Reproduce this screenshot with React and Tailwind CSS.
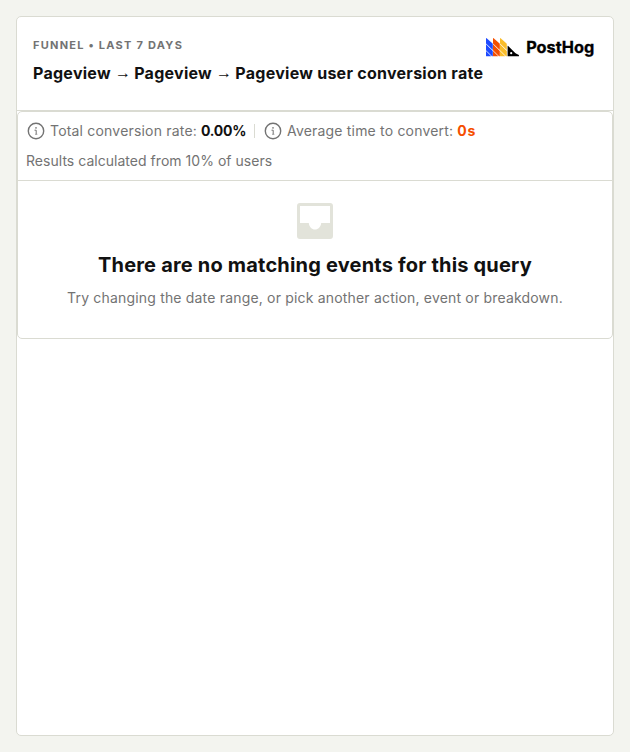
function Logo() {
  return (
    <svg className="overflow-visible" width="110" height="22" viewBox="0 0 110 22" role="img" aria-label="PostHog">
      <g transform="translate(1 2)">
        {[
          ['#1d4aff', 0],
          ['#f54e00', 7],
          ['#f9bd2b', 14],
        ].map(([fill, x]) => (
          <g key={x} fill={fill} transform={`translate(${x} 0)`}>
            <path d="M0 .7Q0 -.4 .9 .4L6.3 5.3Q6.8 5.8 6.8 6.5V12.1L0 5.5Z" />
            <path d="M0 6.3L6.8 12.9V18.3H6.1L0 12.2Z" />
            <path d="M0 13L5.3 18.3H.5Q0 18.3 0 17.8Z" />
          </g>
        ))}
        <path fill="#000" d="M21.6 8.2Q21.6 7.4 22.2 8L29.2 15Q30.2 16 32 16.4Q33 16.7 33 17.6V18.3H21.6Z" />
        <circle cx="25.2" cy="15.2" r="1.1" fill="#fff" />
      </g>
      <text
        x="41.2"
        y="17.1"
        textLength="68"
        lengthAdjust="spacingAndGlyphs"
        strokeWidth=".3"
        className="fill-black stroke-black font-[Inter,sans-serif] text-[15.5px] font-bold"
      >
        PostHog
      </text>
    </svg>
  );
}

function InfoIcon() {
  return (
    <svg className="mr-1 size-5 shrink-0" viewBox="0 0 20 20" fill="none" stroke="#737373">
      <circle cx="10" cy="10" r="7.7" strokeWidth="1.4" />
      <path d="M8.5 9.2H10.2V13.4" strokeWidth="1" />
      <path d="M9 13.3H11.4" strokeWidth=".6" />
      <circle cx="10" cy="6.9" r=".8" fill="#737373" stroke="none" />
    </svg>
  );
}

function EmptyIcon() {
  return (
    <svg className="h-9 w-9" viewBox="0 0 36 36" fill="#e2e3da">
      <path
        fillRule="evenodd"
        d="M3 0H33Q36 0 36 3V33Q36 36 33 36H3Q0 36 0 33V3Q0 0 3 0ZM3 3V20H11.8C12.3 24 14.7 26.5 18 26.5S23.7 24 24.2 20H33V3Z"
      />
    </svg>
  );
}

function Arrow() {
  return (
    <span className="relative -top-px -mr-[0.8px] font-['Liberation_Sans',sans-serif] font-normal tracking-normal">
      →
    </span>
  );
}

export default function App() {
  return (
    <div className="h-[752px] bg-[#f3f4ef] p-4 font-[Inter,sans-serif] text-sm text-[#737373]">
      <main className="h-[720px] rounded-[5px] border border-[#dadbd2] bg-white">
        <header className="flex h-[94px] justify-between border-b border-[#dadbd2] pl-4 pr-[18px] pt-[19px]">
          <div className="whitespace-nowrap">
            <h5 className="mt-[1px] text-[11px] font-bold uppercase leading-4 tracking-[1.25px]">
              Funnel • Last 7 days
            </h5>
            <h4 className="mt-2 text-base font-bold leading-6 tracking-[0.27px] text-[#111]">
              Pageview <Arrow /> Pageview <Arrow /> Pageview user conversion rate
            </h4>
          </div>
          <div className="-ml-4">
            <Logo />
          </div>
        </header>
        <section className="h-[228px] rounded-[5px] border border-[#dadbd2]">
          <div className="h-[69px] border-b border-[#dadbd2] px-2 pt-[9px]">
            <div className="flex h-5 items-center whitespace-nowrap">
              <InfoIcon />
              <span className="tracking-[0.19px]">Total conversion rate:</span>
              <b className="ml-1 w-[45px] tracking-[-0.25px] text-[#111]">0.00%</b>
              <span className="mx-2 h-3.5 w-px bg-[#dadbd2]" />
              <InfoIcon />
              <span className="tracking-[0.19px]">Average time to convert:</span>
              <b className="ml-1 tracking-[0.9px] text-[#f54e00]">0s</b>
            </div>
            <p className="mt-2.5 leading-5 tracking-[0.03px]">Results calculated from 10% of users</p>
          </div>
          <div className="flex flex-col items-center pt-[22px] text-center">
            <EmptyIcon />
            <h2 className="mt-3 text-xl font-bold leading-7 tracking-[0.19px] text-[#111]">
              There are no matching events for this query
            </h2>
            <p className="mt-[9px] leading-5 tracking-[0.18px]">
              Try changing the date range, or pick another action, event or breakdown.
            </p>
          </div>
        </section>
      </main>
    </div>
  );
}
